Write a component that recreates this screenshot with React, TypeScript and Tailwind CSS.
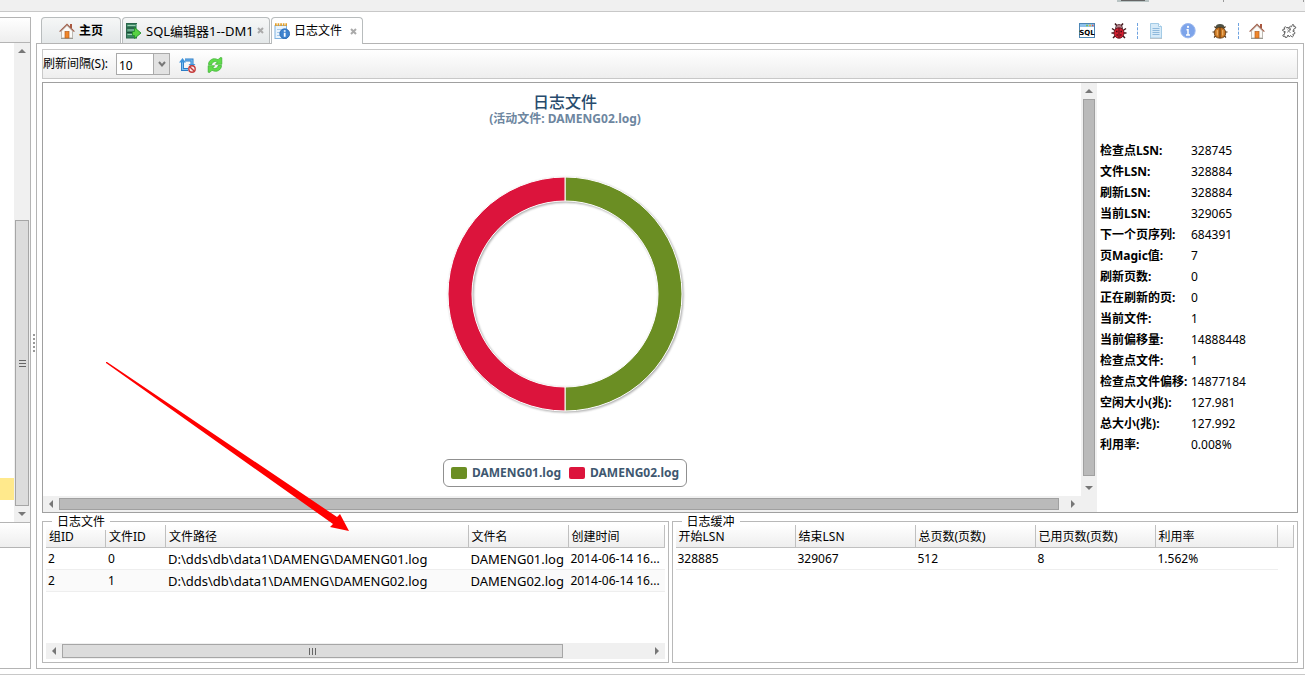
import type { ReactNode } from 'react';

const stats = [
  ['检查点LSN:', '328745'],
  ['文件LSN:', '328884'],
  ['刷新LSN:', '328884'],
  ['当前LSN:', '329065'],
  ['下一个页序列:', '684391'],
  ['页Magic值:', '7'],
  ['刷新页数:', '0'],
  ['正在刷新的页:', '0'],
  ['当前文件:', '1'],
  ['当前偏移量:', '14888448'],
  ['检查点文件:', '1'],
  ['检查点文件偏移:', '14877184'],
  ['空闲大小(兆):', '127.981'],
  ['总大小(兆):', '127.992'],
  ['利用率:', '0.008%'],
];

const fileRows = [
  { group: '2', id: '0', path: 'D:\\dds\\db\\data1\\DAMENG\\DAMENG01.log', name: 'DAMENG01.log', created: '2014-06-14 16...' },
  { group: '2', id: '1', path: 'D:\\dds\\db\\data1\\DAMENG\\DAMENG02.log', name: 'DAMENG02.log', created: '2014-06-14 16...' },
];

function HomeIcon() {
  return (
    <svg width="16" height="16" viewBox="0 0 16 16" aria-hidden="true">
      <rect x="11" y="1" width="2" height="4" fill="#a9573f" />
      <path d="M2.500 8v7h11V8L8 2.500z" fill="#fbfaf7" stroke="#bdb9b2" />
      <path d="M2 15.500h12" stroke="#9c9c94" />
      <rect x="6" y="8.500" width="4" height="6.500" fill="#f0862a" stroke="#b8601d" strokeWidth=".7" />
      <path d="M.6 8.600 8 1.300l7.400 7.300" fill="none" stroke="#a1614d" strokeWidth="1.300" />
    </svg>
  );
}

function ServerIcon() {
  return (
    <svg width="16" height="16" viewBox="0 0 16 16" aria-hidden="true">
      <rect x=".5" y=".5" width="10" height="14.500" fill="#3b8463" stroke="#2b664b" />
      <path d="M1.500 2.500h8M1.500 7h8M1.500 11.500h8" stroke="#9fd0b4" />
      <path d="M1 5h9M1 9.500h9" stroke="#1c4a36" />
      <path d="M10.500 1v13" stroke="#7fb69a" />
      <path d="M8.500 4.500v4h-2v4h2v3l6.500-5.500z" fill="#58d243" stroke="#23912a" strokeWidth=".9" />
    </svg>
  );
}

function LogIcon() {
  return (
    <svg width="16" height="16" viewBox="0 0 16 16" aria-hidden="true">
      <rect x="1" y="2.500" width="11.500" height="13" fill="#eaf4fd" stroke="#7fb2df" />
      <path d="M1 1.700h12" stroke="#e3a02c" strokeWidth="2.800" strokeDasharray="1.700 .9" />
      <path d="M3 6.500h8M3 9.500h4M3 12.500h3" stroke="#a7cbec" />
      <circle cx="10.700" cy="10.700" r="4.900" fill="#3e83cf" stroke="#2563ab" strokeWidth=".8" />
      <path d="M10.700 9.800v3.900M10.700 7.200v1.600" stroke="#fff" strokeWidth="1.800" />
    </svg>
  );
}

function StopRefreshIcon() {
  return (
    <svg width="17" height="16" viewBox="0 0 17 16" aria-hidden="true">
      <path d="M3.500 4.500v8H9M6 3h7v5" fill="none" stroke="#2b7dc6" strokeWidth="3" />
      <path d="M3.500 4.500v8H9M6 3h7v5" fill="none" stroke="#7cc0f5" strokeWidth="1.200" />
      <path d="M0 5.500 3.500 1 7 5.500z" fill="#3d93dc" />
      <path d="M9.500 7h7L13 10.500z" fill="#3d93dc" />
      <circle cx="13" cy="12" r="3.200" fill="#fbe9e9" stroke="#c43d3d" strokeWidth="1.400" />
      <path d="m10.900 9.900 4.200 4.200" stroke="#c43d3d" strokeWidth="1.400" />
    </svg>
  );
}

function RefreshIcon() {
  return (
    <svg width="16" height="16" viewBox="0 0 16 16" aria-hidden="true">
      <path d="M1.500 7.500C1.500 3 6.500 0 11 2.800L13 .7h1.800v6.600H8.300l2-2.300C8 3.800 5.300 5 4.800 7.500z" fill="#5fdc4a" stroke="#36ad2c" strokeWidth=".7" />
      <path d="M14.500 8.500c0 4.500-5 7.500-9.500 4.700l-2 2.100H1.200V8.700h6.500l-2 2.300c2.300 1.200 5 0 5.500-2.500z" fill="#5fdc4a" stroke="#36ad2c" strokeWidth=".7" />
    </svg>
  );
}

function SqlIcon() {
  return (
    <svg width="16" height="16" viewBox="0 0 16 16" aria-hidden="true">
      <rect x=".5" y=".5" width="15" height="14" fill="#fff" stroke="#4d86b5" />
      <rect x="1" y="1" width="14" height="3" fill="#8fc1ea" />
      <path d="M7 2.500h2" stroke="#7ac05a" strokeWidth="1.500" />
      <path d="M10 2.500h2" stroke="#f2b632" strokeWidth="1.500" />
      <path d="M13 2.500h1.500" stroke="#d9534f" strokeWidth="1.500" />
      <text x="8" y="12" textAnchor="middle" fontSize="7" fontWeight="700" fontFamily="DejaVu Sans, sans-serif" fill="#000">SQL</text>
    </svg>
  );
}

function LadybugIcon() {
  return (
    <svg width="16" height="16" viewBox="0 0 16 16" aria-hidden="true">
      <path d="M4 .5 6 3M12 .5 10 3M1 5.500l3 2M15 5.500l-3 2M.5 10H4M15.500 10H12M2 15l2.500-2.500M14 15l-2.500-2.500" stroke="#42171c" strokeWidth="1.500" />
      <path d="M4.500 6c0-3 1.500-4.500 3.500-4.500S11.500 3 11.500 6z" fill="#b08189" stroke="#4b2228" strokeWidth=".8" />
      <ellipse cx="8" cy="10" rx="5" ry="5.300" fill="#d61f31" stroke="#5a1118" strokeWidth=".8" />
      <path d="M8 5v10" stroke="#5a1118" />
      <path d="M5 8.500h1.500M9.500 8.500H11M5.500 12h1.300M9.200 12h1.300" stroke="#4a0d14" strokeWidth="1.600" />
    </svg>
  );
}

function BeetleIcon() {
  return (
    <svg width="16" height="16" viewBox="0 0 16 16" aria-hidden="true">
      <path d="M2.500 3.500 5 6M13.500 3.500 11 6M.5 9H4M15.500 9H12M2 14.500 4.500 12M14 14.500 11.500 12" stroke="#4b3219" strokeWidth="1.100" />
      <ellipse cx="8" cy="4" rx="4.200" ry="3" fill="#4e5144" />
      <path d="M8 4.500C4 4.500 2.300 7 2.300 10c0 3.200 2.200 5.200 5.700 5.200s5.700-2 5.700-5.200c0-3-1.700-5.500-5.700-5.500z" fill="#c97622" stroke="#5b3611" strokeWidth=".8" />
      <path d="M8 4.500v10.500" stroke="#5b3611" />
      <path d="M5.300 7v5.500M10.700 7v5.500" stroke="#eeb063" strokeWidth="1.300" />
    </svg>
  );
}

function PageIcon() {
  return (
    <svg width="16" height="16" viewBox="0 0 16 16" aria-hidden="true">
      <path d="M2.500.5h8l3 3v11.500h-11z" fill="#d6eaf8" stroke="#a3cbe6" />
      <path d="M10.500.5v3h3" fill="#fff" stroke="#a3cbe6" />
      <path d="M4.500 5.500h7M4.500 7.500h7M4.500 9.500h7M4.500 11.500h7" stroke="#8fb9dc" />
      <path d="M2 15.500h12" stroke="#b8c4cc" />
    </svg>
  );
}

function InfoIcon() {
  return (
    <svg width="16" height="16" viewBox="0 0 16 16" aria-hidden="true">
      <circle cx="8" cy="7.700" r="7.200" fill="#7da4ea" stroke="#9db9ee" />
      <path d="M6.500 6.800H8V12M6 12h4" fill="none" stroke="#fff" strokeWidth="1.500" />
      <circle cx="8" cy="3.900" r="1.100" fill="#fff" />
    </svg>
  );
}

function PuzzleIcon() {
  return (
    <svg width="16" height="16" viewBox="0 0 16 16" aria-hidden="true">
      <path
        d="M9.500 6.500 8.500 4l1-1 1 .8 1-2.300 1.500.5-.3 1.500 1.800.3.300 1.200-2.300 1.200.7 1.300-1.500.5 2.300 1.500-.5 1.500-1.700.2.700 1.800-1.300 1-1.700-1.500-1.200 1.500-1.300-2-1.200 2.500-1.500 0-.3-1.500-1.700.5-.5-1.500 2.200-1-1-1.300 1.500-.7L1.500 7.500l.5-1.300 1.800 0L3.200 4.500l1.300-.8 1.500 1.500L7 4l1.200 2.300z"
        fill="#fff"
        stroke="#555"
        strokeWidth=".9"
      />
      <path d="m6 9.500 4-3M6.500 6.500l3 3.500" stroke="#777" strokeWidth=".8" />
    </svg>
  );
}

function Arrow({ dir }: { dir: 'up' | 'down' | 'left' | 'right' }) {
  const paths = { up: 'M0 6 4 2l4 4z', down: 'M0 2h8L4 6z', left: 'M6 0v8L2 4z', right: 'M2 0l4 4-4 4z' };
  return (
    <svg width="8" height="8" viewBox="0 0 8 8" aria-hidden="true">
      <path d={paths[dir]} fill="#777" />
    </svg>
  );
}

function Tab({ icon, active, closable, className, children }: { icon: ReactNode; active?: boolean; closable?: boolean; className: string; children: ReactNode }) {
  return (
    <div
      className={`flex items-center rounded-t-sm border border-b-0 border-[#b8bcbd] ${
        active ? 'h-[27px] bg-white' : 'h-[26px] bg-linear-to-b from-[#f6f7f7] to-[#e4e8e9]'
      } ${className}`}
    >
      <button role="tab" aria-selected={!!active} className="flex items-center gap-1 whitespace-nowrap">
        {icon}
        {children}
      </button>
      {closable && (
        <button aria-label="关闭" className="ml-auto">
          <svg width="7" height="7" viewBox="0 0 7 7" aria-hidden="true">
            <path d="m1 1 5 5M6 1 1 6" stroke="#aaa" strokeWidth="2" />
          </svg>
        </button>
      )}
    </div>
  );
}

function SideBar() {
  return (
    <aside className="flex w-[31px] flex-none flex-col border-y border-r border-[#b4b4b4]">
      <div className="h-[25px] flex-none border-b border-[#b4b4b4] bg-linear-to-b from-white to-[#eee]" />
      <div className="flex flex-1">
        <div className="flex flex-1 flex-col justify-end pb-[22px]">
          <div className="h-[22px] bg-[#ffe98c]" />
        </div>
        <div className="flex w-4 flex-col items-center bg-[#f0f0f0] py-1">
          <Arrow dir="up" />
          <div className="flex-1" />
          <div className="flex h-[286px] w-3.5 flex-none flex-col items-center justify-center gap-0.5 border border-[#a6a6a6] bg-[#dcdcdc]">
            <i className="h-px w-[7px] bg-[#666]" />
            <i className="h-px w-[7px] bg-[#666]" />
            <i className="h-px w-[7px] bg-[#666]" />
          </div>
          <div className="mt-1">
            <Arrow dir="down" />
          </div>
        </div>
      </div>
      <div className="h-[26px] flex-none border-y border-[#b4b4b4] bg-linear-to-b from-white to-[#eee]" />
      <div className="h-[120px] flex-none" />
    </aside>
  );
}

function Donut() {
  return (
    <svg width="240" height="240" viewBox="0 0 240 240" role="img" aria-label="日志文件" className="drop-shadow-[1px_1px_1px_rgba(0,0,0,0.35)]">
      <path d="M120 3a117 117 0 0 1 0 234v-24a93 93 0 0 0 0-186z" fill="#6b8e23" stroke="#fff" />
      <path d="M120 237a117 117 0 0 1 0-234v24a93 93 0 0 0 0 186z" fill="#dc143c" stroke="#fff" />
    </svg>
  );
}

function ChartPanel() {
  return (
    <section className="flex flex-1 border border-[#a0a0a0]">
      <div className="flex min-w-0 flex-1 flex-col">
        <div className="flex flex-1">
          <div className="flex min-w-0 flex-1 flex-col items-center pt-[9px] pl-1.5">
            <h2 className="text-[16px] leading-5 font-medium text-[#274b6d]">日志文件</h2>
            <p className="leading-[14px] font-bold text-[#6d869f]">(活动文件: DAMENG02.log)</p>
            <div className="mt-12">
              <Donut />
            </div>
            <ul className="mt-[45px] flex h-7 items-center gap-2 rounded-md border border-[#909090] px-[7px] font-bold text-[#3e576f]">
              <li className="flex items-center gap-[5px]">
                <i className="h-3 w-4 rounded-xs bg-[#6b8e23]" />
                DAMENG01.log
              </li>
              <li className="flex items-center gap-[5px]">
                <i className="h-3 w-4 rounded-xs bg-[#dc143c]" />
                DAMENG02.log
              </li>
            </ul>
          </div>
          <div className="flex w-4 flex-none flex-col items-center bg-[#f0f0f0] py-1">
            <Arrow dir="up" />
            <div className="mt-1 mb-2 w-3 flex-1 border border-[#a0a0a0] bg-[#bababa]" />
            <Arrow dir="down" />
          </div>
        </div>
        <div className="flex h-4 flex-none items-center bg-[#f0f0f0] pr-5 pl-1">
          <Arrow dir="left" />
          <div className="mx-1 h-3 flex-1 border border-[#a0a0a0] bg-[#bababa]" />
          <div className="pl-1.5">
            <Arrow dir="right" />
          </div>
        </div>
      </div>
      <dl className="grid w-[200px] flex-none auto-rows-[21px] grid-cols-[91px_1fr] content-start items-center pt-[57px] pl-[3px]">
        {stats.map(([label, value]) => (
          <div key={label} className="contents">
            <dt className="font-bold whitespace-nowrap">{label}</dt>
            <dd>{value}</dd>
          </div>
        ))}
      </dl>
    </section>
  );
}

const th = 'h-[23px] border-r border-b border-[#c0c0c0] bg-linear-to-b from-white to-[#eee] pt-0.5 pl-[3px] text-left font-normal whitespace-nowrap';
const td = 'h-[22px] border-b border-[#eee] pl-0.5 whitespace-nowrap';

function LogFiles() {
  return (
    <fieldset className="relative flex min-w-0 flex-1 flex-col border border-[#b8b8b8] p-[3px]">
      <legend className="absolute -top-2 left-[9px] h-4 bg-white px-[5px] leading-4">日志文件</legend>
      <table className="w-full table-fixed border-separate border-spacing-0">
        <colgroup>
          <col className="w-[60px]" />
          <col className="w-[60px]" />
          <col />
          <col className="w-[100px]" />
          <col className="w-[96px]" />
        </colgroup>
        <thead>
          <tr>
            <th className={th}>组ID</th>
            <th className={th}>文件ID</th>
            <th className={th}>文件路径</th>
            <th className={th}>文件名</th>
            <th className={th}>创建时间</th>
          </tr>
        </thead>
        <tbody>
          {fileRows.map((row) => (
            <tr key={row.id} className="even:bg-[#fafafa]">
              <td className={td}>{row.group}</td>
              <td className={td}>{row.id}</td>
              <td className={`${td} text-[13px]`}>{row.path}</td>
              <td className={`${td} text-[13px]`}>{row.name}</td>
              <td className={td}>{row.created}</td>
            </tr>
          ))}
        </tbody>
      </table>
      <div className="mt-auto flex h-4 items-center bg-[#f0f0f0] px-1">
        <Arrow dir="left" />
        <div className="ml-1 flex h-3.5 w-[501px] items-center justify-center gap-0.5 border border-[#a6a6a6] bg-[#dcdcdc]">
          <i className="h-[7px] w-px bg-[#666]" />
          <i className="h-[7px] w-px bg-[#666]" />
          <i className="h-[7px] w-px bg-[#666]" />
        </div>
        <div className="ml-auto">
          <Arrow dir="right" />
        </div>
      </div>
    </fieldset>
  );
}

function LogBuffer() {
  return (
    <fieldset className="relative min-w-0 flex-1 border border-[#b8b8b8] p-[3px]">
      <legend className="absolute -top-2 left-[9px] h-4 bg-white px-[5px] leading-4">日志缓冲</legend>
      <table className="w-full table-fixed border-separate border-spacing-0">
        <colgroup>
          <col className="w-[120px]" />
          <col className="w-[120px]" />
          <col className="w-[120px]" />
          <col className="w-[120px]" />
          <col />
          <col className="w-4" />
        </colgroup>
        <thead>
          <tr>
            <th className={th}>开始LSN</th>
            <th className={th}>结束LSN</th>
            <th className={th}>总页数(页数)</th>
            <th className={th}>已用页数(页数)</th>
            <th className={th}>利用率</th>
            <th className={th} aria-hidden="true" />
          </tr>
        </thead>
        <tbody>
          <tr>
            <td className={td}>328885</td>
            <td className={td}>329067</td>
            <td className={td}>512</td>
            <td className={td}>8</td>
            <td className={td}>1.562%</td>
          </tr>
        </tbody>
      </table>
    </fieldset>
  );
}

export default function App() {
  return (
    <div className="flex min-h-screen flex-col bg-white font-['Noto_Sans','Noto_Sans_CJK_SC',sans-serif] text-[12px] leading-4 text-black">
      <header className="flex h-3 flex-none items-start justify-end border-b border-[#c8c8c8] bg-[#f0f0f0] pr-px">
        <div className="mr-[74px] h-0.5 w-8 border-x-4 border-b border-[#b9c4c4] bg-[#666]" />
        <i className="mr-[79px] h-0.5 w-px bg-[#999]" />
        <i className="h-0.5 w-px bg-[#999]" />
      </header>

      <div className="mt-[5px] flex flex-1">
        <SideBar />
        <div className="flex w-[5px] flex-none flex-col items-center justify-center gap-0.5">
          {[0, 1, 2, 3, 4].map((n) => (
            <i key={n} className="size-0.5 bg-[#999]" />
          ))}
        </div>

        <div className="relative mr-px flex min-w-0 flex-1 flex-col">
          <div className="relative z-10 -mb-px flex h-[27px] flex-none items-start pl-[5px]">
            <div role="tablist" className="flex gap-px">
              <Tab icon={<HomeIcon />} className="w-20 justify-center font-bold">主页</Tab>
              <Tab icon={<ServerIcon />} closable className="w-[148px] pr-[5px] pl-[3px] text-[13px]">SQL编辑器1--DM1</Tab>
              <Tab icon={<LogIcon />} active closable className="w-[92px] pr-[5px] pl-0.5">日志文件</Tab>
            </div>
            <div className="ml-auto flex items-center gap-4 pt-1.5 pr-[7px]">
              <button aria-label="SQL"><SqlIcon /></button>
              <button aria-label="调试"><LadybugIcon /></button>
              <i className="-mx-1.5 h-4 border-l border-dashed border-[#6fa3e0]" />
              <button aria-label="文档"><PageIcon /></button>
              <button aria-label="信息"><InfoIcon /></button>
              <button aria-label="错误"><BeetleIcon /></button>
              <i className="-mx-1.5 h-4 border-l border-dashed border-[#6fa3e0]" />
              <button aria-label="主页"><HomeIcon /></button>
              <button aria-label="插件"><PuzzleIcon /></button>
            </div>
          </div>

          <main className="flex flex-1 flex-col border border-[#b4b4b4] p-[5px]">
            <div className="flex h-[30px] flex-none items-center border border-[#c8c8c8] bg-linear-to-b from-white to-[#eee]">
              <label htmlFor="interval" className="w-[73px] whitespace-nowrap">刷新间隔(S):</label>
              <div className="flex h-[22px] w-[54px] border border-[#aaa] bg-white">
                <input id="interval" defaultValue="10" className="w-9 min-w-0 px-0.5 pt-1 outline-none" />
                <button aria-label="展开" className="flex flex-1 items-center justify-center border-l border-[#aaa] bg-[#e2e2e2]">
                  <svg width="8" height="7" viewBox="0 0 8 7" aria-hidden="true">
                    <path d="m1 1 3 3.500L7 1" fill="none" stroke="#777" strokeWidth="2" />
                  </svg>
                </button>
              </div>
              <button aria-label="停止刷新" className="ml-[9px] pt-0.5"><StopRefreshIcon /></button>
              <button aria-label="刷新" className="ml-[11px] pt-0.5"><RefreshIcon /></button>
            </div>

            <div className="mt-[3px] flex flex-1 flex-col">
              <ChartPanel />
            </div>

            <div className="mt-2 flex h-[142px] flex-none gap-[3px]">
              <LogFiles />
              <LogBuffer />
            </div>
          </main>

          {/* pointer towards the file list */}
          <svg className="pointer-events-none absolute top-[345px] left-[70px] z-20" width="245" height="170" viewBox="0 0 245 170" aria-hidden="true">
            <path d="M0 0 1 0 231 155 234 152 243 169 224 165 227 162 0 1z" fill="#f00" />
          </svg>
        </div>
      </div>
      <footer className="mt-[5px] h-1 flex-none border-t border-[#c8c8c8]" />
    </div>
  );
}
